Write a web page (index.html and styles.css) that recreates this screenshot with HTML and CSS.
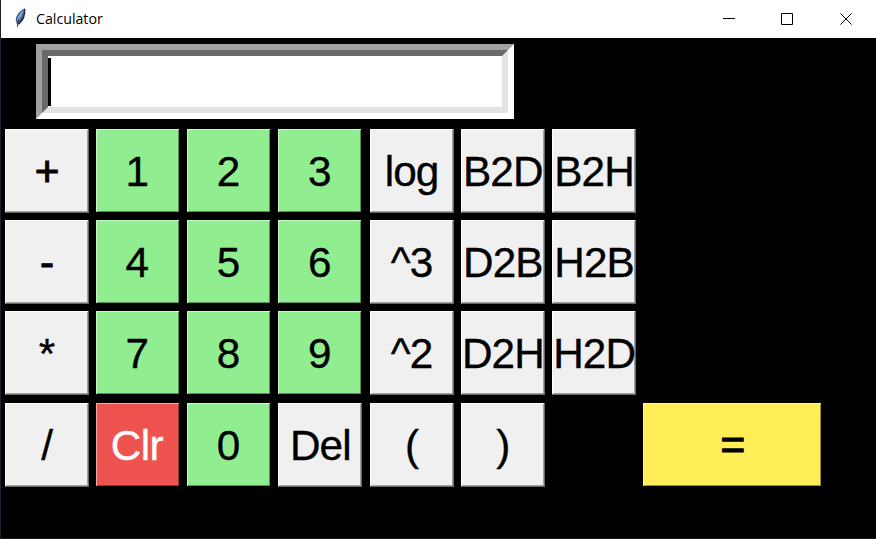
FILE: index.html
```html
<!DOCTYPE html>
<html lang="en">
<head>
<meta charset="utf-8">
<title>Calculator</title>
<link rel="stylesheet" href="styles.css">
</head>
<body>
<div class="window">
  <header class="titlebar">
    <svg class="feather" width="16" height="20" viewBox="0 0 16 20">
      <path d="M11.6 .6C7.5 2 3.2 7 2.7 11.5L4 16.8 5.6 16.2C9.5 13 12 7 11.6 .6Z" fill="#42618c"/>
      <path d="M10.6 2C7 4.5 4.7 8 4 12.5L6.5 11C8.5 8.5 10 5 10.6 2Z" fill="#7ea5d8"/>
      <path d="M11.6 .8C12.3 7 9.5 13 5.6 16.2" fill="none" stroke="#22262e" stroke-width="1.3"/>
      <path d="M5.6 12C5 14 4.7 16 4.5 19" fill="none" stroke="#30363f" stroke-width=".9"/>
    </svg>
    <h1 class="title">Calculator</h1>
    <div class="controls">
      <svg class="control" viewBox="0 0 12 12"><path d="M0 5.5H12"/></svg>
      <svg class="control" viewBox="0 0 12 12"><path d="M.5 .5H11.5V11.5H.5Z"/></svg>
      <svg class="control close" viewBox="0 0 12 12"><path d="M.4 .4L11.6 11.6M11.6 .4L.4 11.6"/></svg>
    </div>
  </header>
  <main class="body">
    <div class="display"><span class="caret"></span></div>
    <div class="keys">
      <button class="key heavy">+</button><button class="key num">1</button><button class="key num">2</button><button class="key num">3</button><button class="key">log</button><button class="key">B2D</button><button class="key">B2H</button>
      <button class="key first heavy">-</button><button class="key num">4</button><button class="key num">5</button><button class="key num">6</button><button class="key">^3</button><button class="key">D2B</button><button class="key">H2B</button>
      <button class="key first">*</button><button class="key num">7</button><button class="key num">8</button><button class="key num">9</button><button class="key">^2</button><button class="key">D2H</button><button class="key">H2D</button>
      <button class="key first">/</button><button class="key clear">Clr</button><button class="key num">0</button><button class="key">Del</button><button class="key">(</button><button class="key">)</button><button class="key equals">=</button>
    </div>
  </main>
</div>
</body>
</html>
```
FILE: styles.css
```css
* { box-sizing: border-box; }
body { margin: 0; background: #000; overflow: hidden; }
.window {
  width: 876px;
  height: 539px;
  display: flex;
  flex-direction: column;
  background: #000;
  border-left: 1px solid #20202a;
  border-bottom: 1px solid #2b1c2b;
}
.titlebar {
  height: 38px;
  flex: none;
  display: flex;
  align-items: center;
  padding: 0 24px 0 12px;
  background: #fff;
}
.feather { flex: none; margin-top: -2px; }
.title {
  margin: 0 0 0 7px;
  font: 400 14.2px/20px "Open Sans", "Noto Sans", sans-serif;
  color: #000;
}
.controls { margin-left: auto; display: flex; gap: 46px; }
.control {
  width: 12px;
  height: 12px;
  fill: none;
  stroke: #000;
  stroke-width: 1;
}
.close { margin-left: 1px; }
.body { flex: 1; padding: 6px 0 0 3.6px; }
.display {
  width: 478px;
  height: 75px;
  margin: 0 0 10px 31.4px;
  border: 6px solid;
  border-color: #a0a0a0 #fff #fff #a0a0a0;
  display: flex;
  background: #fff;
}
.caret {
  flex: 1;
  border: 6px solid;
  border-color: #696969 #e3e3e3 #e3e3e3 #696969;
  background: linear-gradient(#000, #000) 0 2px / 3px 48px no-repeat #fff;
  background-origin: padding-box;
}
.keys {
  display: grid;
  grid-template-columns: repeat(7, 84px) 178px;
  grid-auto-rows: 84px;
  gap: 7.2px 7.25px;
}
.key {
  min-width: 0;
  padding: 2px 0 0;
  display: flex;
  align-items: center;
  justify-content: center;
  font: 42.3px/46px "Liberation Sans", Arial, sans-serif;
  letter-spacing: -0.9px;
  -webkit-text-stroke: 0.35px currentColor;
  color: #000;
  background: #f0f0f0;
  border: 0;
  box-shadow: inset -1px -1px #696969, inset 1px 1px #fff, inset -2px -2px #a0a0a0;
}
.first { grid-column: 1; }
.heavy { -webkit-text-stroke-width: 1px; }
.num {
  padding-right: 2px;
  background: #90ee90;
  box-shadow: inset -1px -1px #000, inset 1px 1px #c8f8c8, inset -2px -2px #568f56;
}
.clear {
  padding-right: 2px;
  letter-spacing: -0.6px;
  color: #fff;
  background: #ef5350;
  box-shadow: inset -1px -1px #000, inset 1px 1px #f8a9a7, inset -2px -2px #8f3230;
}
.equals {
  grid-column: 8;
  padding-top: 0;
  -webkit-text-stroke-width: 1.2px;
  background: #ffee58;
  box-shadow: inset 0 -1px #000, inset 1px 1px #fff6ac, inset -1px -2px #998f35;
}
```
